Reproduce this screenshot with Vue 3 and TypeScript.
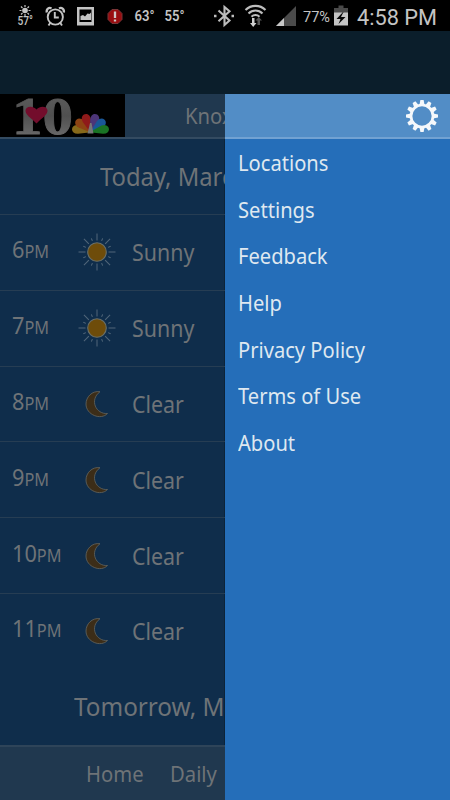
<script setup lang="ts">
interface Hour { hour: string; sky: 'Sunny' | 'Clear' }
const hours: Hour[] = [
  { hour: '6', sky: 'Sunny' },
  { hour: '7', sky: 'Sunny' },
  { hour: '8', sky: 'Clear' },
  { hour: '9', sky: 'Clear' },
  { hour: '10', sky: 'Clear' },
  { hour: '11', sky: 'Clear' },
]
const menu: string[] = ['Locations', 'Settings', 'Feedback', 'Help', 'Privacy Policy', 'Terms of Use', 'About']
const rays: number[] = Array.from({ length: 16 }, (_, i) => i * 22.5)
const teeth: number[] = Array.from({ length: 12 }, (_, i) => i * 30)
const feathers = [
  { angle: -79, color: '#87691a' },
  { angle: -50, color: '#8d4313' },
  { angle: -18, color: '#8f1a1a' },
  { angle: 18, color: '#4c3578' },
  { angle: 50, color: '#1a5797' },
  { angle: 79, color: '#1a7424' },
]
</script>

<template>
  <div class="screen">
    <header class="status">
      <svg class="status-icons" width="450" height="31" viewBox="0 0 450 31">
        <g fill="#c4c4c4" stroke="#c4c4c4">
          <circle cx="25" cy="10.5" r="2.8" stroke="none" />
          <path d="M25 5v2M25 14v2M19.5 10.5h2M28.5 10.5h2M21 6.5l1.5 1.5M29 6.5l-1.5 1.5M21 14.5l1.5-1.5M29 14.5l-1.5-1.5" stroke-width="1.2" />
        </g>
        <text x="17.5" y="25" class="tiny" textLength="15.5" lengthAdjust="spacingAndGlyphs">57°</text>
        <g fill="none" stroke="#c4c4c4" stroke-width="1.9">
          <circle cx="55.3" cy="17" r="7.6" />
          <path d="M54.8 12v5.5h4M50.5 22.5l-2 3M60 22.5l2 3" />
          <path d="M46.8 12.5C46 9 49 7 51.5 8.4M63.8 12.5C64.6 9 61.6 7 59 8.4" stroke-width="2.3" />
        </g>
        <path d="M77 7h17v18.5H77zM79.5 9.5V22h12V9.5z" fill="#c4c4c4" fill-rule="evenodd" />
        <path d="M80.5 20v-4l2.5-1 2 1.5 2.5-3 2 .5 1.5-1.5V20z" fill="#c4c4c4" />
        <path d="M112 9.5h6l4 4v6l-4 4h-6l-4-4v-6z" fill="#990d10" stroke="#783536" />
        <path d="M115 11.5v6.5M115 19.5v2" stroke="#d0c5c5" stroke-width="2.3" />
        <text x="134.5" y="21" class="temp" textLength="20" lengthAdjust="spacingAndGlyphs">63°</text>
        <text x="164.5" y="21" class="temp" textLength="20" lengthAdjust="spacingAndGlyphs">55°</text>
        <g fill="none" stroke="#bdbdbd" stroke-width="2.1">
          <path d="M218.5 10.5l11 10-5 4.500V7l5 4.200-11 10" />
          <path d="M214 16h2.500M231.500 16h2.500" stroke-width="2.4" />
          <path d="M245.500 10c5.500-5.500 14.500-5.500 20 0M248.500 13.500c4-4 10-4 14 0M251.500 16.700c2.300-2.300 5.700-2.300 8 0" />
        </g>
        <path d="M252 18h2.500v5h2L253.200 27l-3.200-4h2z" fill="#d0d0d0" />
        <path d="M257.500 25v-4.500h-2l3.300-3.500 3.200 3.500h-2V25z" fill="#555" />
        <path d="M296 6v20h-20z" fill="#4b4b4b" />
        <path d="M284 18v8h-8z" fill="#c8c8c8" />
        <text x="303" y="22" class="battery" textLength="27" lengthAdjust="spacingAndGlyphs">77%</text>
        <path d="M338.500 5.500h5V8h4.500v5h-14V8h4.500z" fill="#4a4a4a" />
        <path d="M334 12.500h14V25.500h-14z" fill="#c4c4c4" />
        <path d="M343 12l-6.500 7h4l-2 5 7-7h-4.500l2.500-5z" fill="#080808" />
        <text x="357" y="25" class="clock" textLength="80" lengthAdjust="spacingAndGlyphs">4:58 PM</text>
      </svg>
    </header>
    <div class="spacer"></div>

    <div class="body">
      <section class="forecast">
        <div class="station">
          <svg class="logo" width="125" height="43" viewBox="0 94 125 43">
            <defs>
              <linearGradient id="metal" x1="0" y1="0" x2="0" y2="1">
                <stop offset="0" stop-color="#606060" /><stop offset=".5" stop-color="#505050" /><stop offset="1" stop-color="#747474" />
              </linearGradient>
            </defs>
            <text x="12" y="134" class="ten" fill="url(#metal)" stroke="url(#metal)" textLength="61" lengthAdjust="spacingAndGlyphs">10</text>
            <path d="M36.500 123.500C30 117 25.500 114.500 25.500 110.700C25.500 106 33 105.500 36.500 109.500C40 105.500 47.500 106 47.500 110.700C47.500 114.500 43 117 36.500 123.500z" fill="#730d2c" />
            <g transform="translate(90.5 132)">
              <path v-for="f in feathers" :key="f.angle" :fill="f.color" :transform="`rotate(${f.angle})`" d="M0 1L-4.200-12C-6-21 6-21 4.200-12z" />
              <path d="M-3 1.500L-.5-9h1.500L3 1.500z" fill="#777" />
            </g>
          </svg>
          <span class="city"><span class="fit">Knoxville, TN</span></span>
        </div>
        <h2 class="day today"><span class="fit">Today, March 20</span></h2>
        <div v-for="h in hours" :key="h.hour" class="hour">
          <span class="time fit">{{ h.hour }}<small>PM</small></span>
          <svg class="sky" width="38" height="38" viewBox="-19 -19 38 38">
            <template v-if="h.sky === 'Sunny'">
              <path v-for="(a, i) in rays" :key="a" :d="i % 2 ? 'M0-12v-2.800' : 'M0-11.500v-7'" :transform="`rotate(${a})`" stroke="#52677a" stroke-width="1" />
              <circle r="9.3" fill="#6e4c0a" stroke="#69706b" stroke-width="1.1" />
            </template>
            <path v-else d="M3-12.300C-5-13.500-11-7-11 0C-11 11 4 16.500 10.500 9.500C-1 10.500-8-4 3-12.300z" fill="#3c2d18" stroke="#65665f" stroke-width=".8" />
          </svg>
          <span class="label fit">{{ h.sky }}</span>
        </div>
        <h2 class="day tomorrow"><span class="fit">Tomorrow, March 21</span></h2>
        <nav class="tabs"><span class="fit home">Home</span><span class="fit">Daily</span></nav>
      </section>

      <aside class="drawer">
        <div class="drawer-head">
          <svg width="34" height="34" viewBox="-17 -17 34 34">
            <circle r="11" fill="none" stroke="#f5f8fb" stroke-width="2.7" />
            <path v-for="a in teeth" :key="a" d="M-2.600-11L-1.600-16h3.200L2.600-11z" fill="#f5f8fb" :transform="`rotate(${a})`" />
          </svg>
        </div>
        <ul>
          <li v-for="m in menu" :key="m"><span class="fit">{{ m }}</span></li>
        </ul>
      </aside>
    </div>
  </div>
</template>

<style>
body { margin: 0; background: #0b1e2b; }
</style>

<style scoped>
.screen { width: 450px; height: 800px; overflow: hidden; display: flex; flex-direction: column; background: #0b1e2b; font-family: "Noto Sans", "Open Sans", sans-serif; }
.status { height: 31px; background: #000; flex: none; }
.status-icons { display: block; }
.status-icons text { fill: #c4c4c4; font-family: Roboto, sans-serif; }
.status-icons .tiny { font-size: 12px; font-weight: 500; }
.status-icons .temp { font-size: 14px; font-weight: 600; }
.status-icons .battery { font-size: 15px; }
.status-icons .clock { font-size: 22.5px; }
.spacer { height: 63px; flex: none; }
.body { display: grid; grid-template-columns: 225px 225px; height: 706px; }
.fit { display: inline-block; white-space: nowrap; transform: scaleX(.92); transform-origin: left center; }
.forecast { overflow: hidden; background: #0f2d4b; color: #6e7377; display: flex; flex-direction: column; box-shadow: inset -1px 0 #0c2339; }
.station { height: 43px; border-bottom: 2px solid #344b61; display: flex; background: #20384f; flex: none; }
.logo { display: block; background: #000; flex: none; }
.ten { font: bold 53px "Liberation Serif", serif; stroke-width: .8px; }
.city { padding-left: 60px; font-size: 22px; line-height: 43px; }
.day { margin: 0; font-weight: 400; font-size: 26px; line-height: 74px; height: 75px; flex: none; }
.today { padding-left: 99.5px; }
.today .fit { transform: scaleX(.915); }
.tomorrow { padding-left: 74px; height: 76px; }
.tomorrow .fit { transform: scaleX(.933); }
.hour { box-sizing: border-box; height: 75.8px; flex: none; border-top: 1px solid #263d53; display: grid; grid-template-columns: 66px 54px 1fr; align-items: center; padding-left: 12.4px; }
.time { font-size: 24px; line-height: 30px; padding-bottom: 4px; }
.time.fit { transform: scaleX(.905); }
.time small { font-size: 18px; }
.sky { display: block; }
.label { font-size: 23px; line-height: 30px; }
.label.fit { transform: scaleX(.93); }
.tabs { flex: 1; border-top: 2px solid #2e4459; background: #20384f; display: flex; padding-left: 86px; font-size: 22px; line-height: 52px; }
.home { width: 84px; }
.drawer { background: #256eb9; }
.drawer-head { height: 43px; background: #528dc6; border-bottom: 2px solid #72a2d2; display: flex; align-items: center; justify-content: flex-end; padding-right: 11px; }
ul { list-style: none; margin: 0; padding: 0 0 0 12.5px; }
li { height: 46.7px; line-height: 47px; font-size: 22px; color: #dfe8f0; }
li .fit { transform: scaleX(.915); }
</style>
